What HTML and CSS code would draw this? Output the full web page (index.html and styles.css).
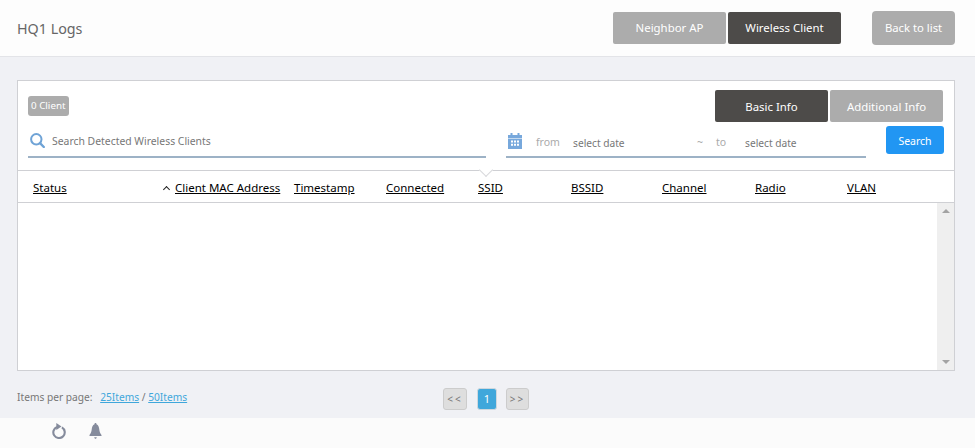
FILE: index.html
```html
<!DOCTYPE html>
<html lang="en">
<head>
<meta charset="utf-8">
<title>HQ1 Logs</title>
<link rel="stylesheet" href="styles.css">
</head>
<body>
<header class="topbar">
  <h1 class="title">HQ1 Logs</h1>
  <div class="top-actions">
    <div class="seg">
      <button class="seg-btn">Neighbor AP</button>
      <button class="seg-btn active">Wireless Client</button>
    </div>
    <button class="back">Back to list</button>
  </div>
</header>
<main class="content">
  <section class="panel">
    <div class="toolbar">
      <div class="row-one">
        <span class="badge">0 Client</span>
        <div class="seg">
          <button class="seg-btn active">Basic Info</button>
          <button class="seg-btn">Additional Info</button>
        </div>
      </div>
      <div class="row-two">
        <div class="search-field">
          <svg class="search-icon" width="15" height="15" viewBox="0 0 15 15" aria-hidden="true"><circle cx="6.3" cy="6.3" r="5.2" fill="none" stroke="#6fa3d6" stroke-width="2"/><path d="M10 10.200 13.800 14" stroke="#6fa3d6" stroke-width="2.400" stroke-linecap="round"/></svg>
          <span class="search-text">Search Detected Wireless Clients</span>
        </div>
        <div class="date-field">
          <svg class="cal" width="14" height="16" viewBox="0 0 14 16" aria-hidden="true"><path fill="#77a8dc" d="M0 2h2.500V0h2v2h5V0h2v2H14v14H0z"/><path fill="#d9e6f5" d="M0 5.200h14v.8H0z"/><path fill="#fff" d="M3 7.500h2v2H3zM6 7.500h2v2H6zM9 7.500h2v2H9zM3 10.800h2v2H3zM6 10.800h2v2H6zM9 10.800h2v2H9z"/></svg>
          <span class="lbl from">from</span>
          <span class="date date-a">select date</span>
          <span class="lbl tilde">~</span>
          <span class="lbl to">to</span>
          <span class="date">select date</span>
        </div>
        <button class="search-btn">Search</button>
      </div>
    </div>
    <div class="thead">
      <i class="notch"></i>
      <a class="col">Status</a>
      <a class="col sorted">Client MAC Address</a>
      <a class="col">Timestamp</a>
      <a class="col">Connected</a>
      <a class="col">SSID</a>
      <a class="col">BSSID</a>
      <a class="col">Channel</a>
      <a class="col">Radio</a>
      <a class="col">VLAN</a>
    </div>
    <div class="tbody">
      <div class="rows"></div>
      <div class="scrollbar">
        <i class="arrow up"></i>
        <i class="arrow down"></i>
      </div>
    </div>
  </section>
  <div class="pager-row">
    <div class="per-page">Items per page: <a class="per-first">25Items</a> / <a>50Items</a></div>
    <nav class="pager">
      <span class="pg prev">&lt;&lt;</span>
      <span class="pg current">1</span>
      <span class="pg">&gt;&gt;</span>
    </nav>
  </div>
</main>
<footer class="footbar">
  <svg class="reload" width="15" height="16" viewBox="0 0 15 16" aria-hidden="true"><path d="M10.900 3.900A5.700 5.700 0 1 1 6 3.500" fill="none" stroke="#858b9c" stroke-width="2.100" transform="translate(0 .5)"/><path d="M5.300 0 10.500 3.500 5.300 7z" fill="#858b9c"/></svg>
  <svg class="bell" width="13" height="16" viewBox="0 0 13 16" aria-hidden="true"><path fill="#858b9c" d="M6.500 0c.7 0 1 .5 1 1.200 1.900.7 2.500 2.800 2.800 5.300.2 2.200.9 3.900 2.200 5.500v1H.5v-1c1.300-1.600 2-3.300 2.200-5.500C3 4 3.600 1.900 5.500 1.200 5.500.5 5.800 0 6.500 0zM5.200 14.200h2.600c-.1.900-.6 1.500-1.300 1.500s-1.200-.6-1.300-1.500z"/></svg>
</footer>
</body>
</html>
```
FILE: styles.css
```css
* { box-sizing: border-box; }
html, body { margin: 0; padding: 0; }
body {
  width: 975px;
  height: 448px;
  overflow: hidden;
  background: #f0f1f5;
  font-family: "Noto Sans", sans-serif;
  font-size: 12px;
  color: #777;
}
button { font-family: inherit; border: 0; padding: 0; }

.topbar {
  height: 57px;
  background: #fdfdfd;
  border-bottom: 1px solid #e3e4e8;
  display: flex;
  justify-content: space-between;
  align-items: center;
  padding: 0 20px 0 17px;
}
.title { margin: 0; font-size: 14.300px; font-weight: 400; color: #666; }
.top-actions { display: flex; align-items: center; gap: 31px; margin-top: -1px; }
.seg { display: flex; gap: 2px; }
.seg-btn {
  width: 113px;
  height: 32px;
  background: #acacac;
  color: #fff;
  font-size: 11.400px;
  border-radius: 2px;
}
.seg-btn.active { background: #4d4b49; }
.back {
  width: 83px;
  height: 34px;
  padding-bottom: 1px;
  background: #acacac;
  color: #fff;
  font-size: 11.300px;
  border-radius: 4px;
}

.content { height: 361px; padding: 23px 20px 0 17px; }
.panel {
  height: 291px;
  background: #fff;
  border: 1px solid #cfd0d4;
  display: flex;
  flex-direction: column;
}
.toolbar { height: 89px; padding: 9px 10px 0 10px; }
.row-one { display: flex; justify-content: space-between; align-items: center; height: 32px; padding-right: 1px; }
.badge {
  background: #acacac;
  color: #fff;
  font-size: 9.800px;
  height: 20px;
  line-height: 20px;
  padding: 0 3px;
  border-radius: 3px;
}
.row-two { display: flex; align-items: flex-start; margin-top: 4px; }
.search-field {
  width: 458px;
  height: 32px;
  border-bottom: 2px solid #9db2c6;
  display: flex;
  align-items: center;
  gap: 7px;
  padding: 0 0 2px 2px;
  font-size: 10.400px;
  color: #777;
}
.search-text { margin-top: 2px; }
.date-field {
  width: 360px;
  height: 32px;
  margin-left: 20px;
  border-bottom: 2px solid #9db2c6;
  display: flex;
  align-items: center;
  padding: 0 0 2px 2px;
  font-size: 10.200px;
  color: #777;
}
.date { margin-top: 5px; }
.lbl { color: #aaa; font-size: 10.500px; margin-top: 3px; }
.cal { margin-top: 1px; }
.from { margin-left: 14px; width: 23px; }
.date-a { margin-left: 14px; width: 124px; }
.tilde { width: 19px; }
.to { width: 29px; }
.search-btn {
  width: 58px;
  height: 28px;
  padding-top: 1px;
  margin-left: 20px;
  background: #2196f3;
  color: #fff;
  font-size: 10.500px;
  border-radius: 3px;
}

.thead {
  position: relative;
  height: 33px;
  border-top: 1px solid #cfd0d4;
  border-bottom: 1px solid #cfd0d4;
  display: grid;
  grid-template-columns: 142px 119px 92px 92px 93px 91px 93px 92px 1fr;
  align-items: center;
  padding-left: 15px;
}
.notch {
  position: absolute;
  left: 463px;
  top: -6px;
  width: 10px;
  height: 10px;
  background: #fff;
  border-right: 1px solid #d8d9dc;
  border-bottom: 1px solid #d8d9dc;
  transform: rotate(45deg);
}
.col { color: #000; text-decoration: underline; font-size: 11.500px; position: relative; top: 1px; }
.sorted::before {
  content: "";
  position: absolute;
  left: -11px;
  top: 7px;
  width: 4px;
  height: 4px;
  border-left: 1px solid #222;
  border-top: 1px solid #222;
  transform: rotate(45deg);
}
.tbody { flex: 1; display: flex; }
.rows { flex: 1; }
.scrollbar {
  width: 17px;
  background: #efefef;
  display: flex;
  flex-direction: column;
  justify-content: space-between;
  align-items: center;
  padding: 6px 0;
}
.arrow { width: 0; height: 0; border-left: 4px solid transparent; border-right: 4px solid transparent; }
.up { border-bottom: 4px solid #a3a3a3; }
.down { border-top: 4px solid #a3a3a3; }

.pager-row { position: relative; display: flex; align-items: center; height: 47px; padding-top: 4px; }
.per-page { font-size: 10.200px; color: #777; }
.per-page a { color: #3fa7db; text-decoration: underline; }
.per-first { margin-left: 5px; }
.pager { position: absolute; left: 426px; top: 17px; display: flex; gap: 9px; }
.pg {
  width: 23px;
  height: 22px;
  line-height: 20px;
  text-align: center;
  border: 1px solid #cccccc;
  border-radius: 3px;
  background: #dedede;
  color: #777;
  font-size: 10px;
  letter-spacing: 2px;
}
.prev { width: 24px; margin-right: 1px; }
.pg.current { width: 20px; background: #3fa7db; color: #fff; border-color: #cfd8de; letter-spacing: 0; font-size: 11px; }

.footbar {
  height: 30px;
  background: #fbfbfb;
  display: flex;
  align-items: flex-start;
  padding: 5px 0 0 51px;
  gap: 23px;
}
```
